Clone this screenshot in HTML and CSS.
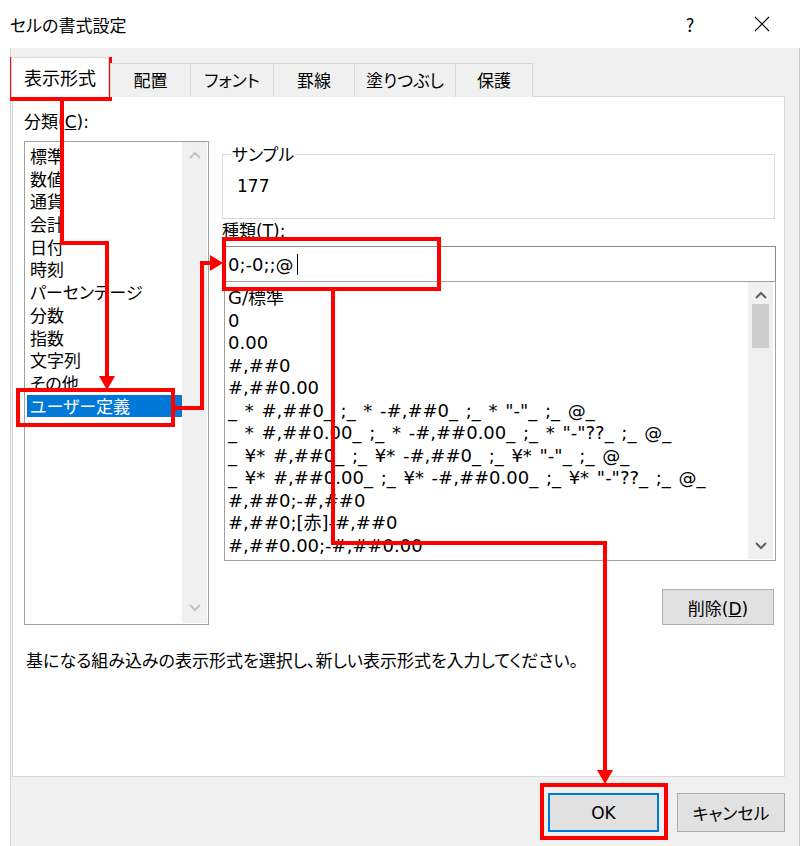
FILE: index.html
```html
<!DOCTYPE html>
<html lang="ja">
<head>
<meta charset="utf-8">
<title>セルの書式設定</title>
<link rel="stylesheet" href="styles.css">
</head>
<body>
<div class="window">
  <div class="titlebar">
    <div class="title">セルの書式設定</div>
    <div class="tbtn help">?</div>
    <div class="tbtn close">
      <svg width="16" height="16" viewBox="0 0 16 16"><path d="M1 1 L15 15 M15 1 L1 15" stroke="#000" stroke-width="1.2" fill="none"/></svg>
    </div>
  </div>
  <div class="main">
    <div class="edge"></div>
    <div class="dialog">
      <div class="tabs">
        <div class="tab active">表示形式</div>
        <div class="tab">配置</div>
        <div class="tab">フォント</div>
        <div class="tab">罫線</div>
        <div class="tab">塗りつぶし</div>
        <div class="tab">保護</div>
      </div>
      <div class="panel">
        <div class="cols">
          <div class="left">
            <div class="label">分類(<u>C</u>):</div>
            <div class="listbox">
              <ul class="items">
                <li>標準</li>
                <li>数値</li>
                <li>通貨</li>
                <li>会計</li>
                <li>日付</li>
                <li>時刻</li>
                <li>パーセンテージ</li>
                <li>分数</li>
                <li>指数</li>
                <li>文字列</li>
                <li>その他</li>
                <li class="selected">ユーザー定義</li>
              </ul>
              <div class="vscroll disabled">
                <svg class="chev" width="14" height="10" viewBox="0 0 14 10"><polyline points="2,8 7,3 12,8" fill="none" stroke="#c3c3c3" stroke-width="2"/></svg>
                <svg class="chev" width="14" height="10" viewBox="0 0 14 10"><polyline points="2,2 7,7 12,2" fill="none" stroke="#c3c3c3" stroke-width="2"/></svg>
              </div>
            </div>
          </div>
          <div class="right">
            <fieldset class="sample">
              <legend>サンプル</legend>
              <div class="sample-value">177</div>
            </fieldset>
            <div class="label type-label">種類(<u>T</u>):</div>
            <div class="input"><span>0;-0;;@</span><span class="caret"></span></div>
            <div class="typelist">
              <ul class="titems">
                <li>G/標準</li>
                <li>0</li>
                <li>0.00</li>
                <li>#,##0</li>
                <li>#,##0.00</li>
                <li>_ * #,##0_ ;_ * -#,##0_ ;_ * "-"_ ;_ @_</li>
                <li>_ * #,##0.00_ ;_ * -#,##0.00_ ;_ * "-"??_ ;_ @_</li>
                <li>_ ¥* #,##0_ ;_ ¥* -#,##0_ ;_ ¥* "-"_ ;_ @_</li>
                <li>_ ¥* #,##0.00_ ;_ ¥* -#,##0.00_ ;_ ¥* "-"??_ ;_ @_</li>
                <li>#,##0;-#,##0</li>
                <li>#,##0;[赤]-#,##0</li>
                <li>#,##0.00;-#,##0.00</li>
              </ul>
              <div class="vscroll">
                <svg class="chev" width="14" height="10" viewBox="0 0 14 10"><polyline points="2,8 7,3 12,8" fill="none" stroke="#606060" stroke-width="2"/></svg>
                <div class="thumb"></div>
                <div class="track"></div>
                <svg class="chev" width="14" height="10" viewBox="0 0 14 10"><polyline points="2,2 7,7 12,2" fill="none" stroke="#606060" stroke-width="2"/></svg>
              </div>
            </div>
            <div class="btnrow">
              <button class="btn del">削除(<u>D</u>)</button>
            </div>
          </div>
        </div>
        <p class="desc">基になる組み込みの表示形式を選択し、新しい表示形式を入力してください。</p>
      </div>
      <div class="buttons">
        <button class="btn ok">OK</button>
        <button class="btn cancel">キャンセル</button>
      </div>
    </div>
  </div>
  <svg class="annot" width="800" height="846" viewBox="0 0 800 846">
    <g fill="none" stroke="#ff0000" stroke-width="4">
      <rect x="12" y="59" width="98" height="40"/>
      <path d="M62 101 V243 H107 V378"/>
      <rect x="18" y="390" width="155" height="35"/>
      <path d="M175 408 H202 V263 H212"/>
      <rect x="224" y="239" width="215" height="50"/>
      <path d="M333 291 V543 H605 V772"/>
      <rect x="542" y="785" width="124" height="53"/>
    </g>
    <g fill="#ff0000">
      <polygon points="99,376 115,376 107,390"/>
      <polygon points="210,255 210,271 223,263"/>
      <polygon points="597,770 613,770 605,784"/>
    </g>
  </svg>
</div>
</body>
</html>
```

FILE: styles.css
```css
* { box-sizing: border-box; }
html, body { margin: 0; padding: 0; }
body {
  width: 800px;
  height: 846px;
  overflow: hidden;
  background: #f0f0f0;
  color: #000;
  font-family: "DejaVu Sans", "Noto Sans CJK JP", sans-serif;
  font-feature-settings: "palt";
  font-size: 17px;
}
ul { list-style: none; margin: 0; padding: 0; }
.window {
  position: relative;
  width: 800px;
  height: 846px;
  display: flex;
  flex-direction: column;
}
.titlebar {
  height: 48px;
  background: #fff;
  display: flex;
  align-items: center;
  padding: 0 2px 0 10px;
  font-family: "Noto Sans CJK JP", sans-serif;
  font-size: 17px;
}
.title { flex: 1; }
.tbtn {
  width: 72px;
  height: 48px;
  display: flex;
  align-items: center;
  justify-content: center;
}
.help { font-size: 18px; }
.main { flex: 1; display: flex; }
.edge {
  width: 11px;
  background: #fff;
  border-right: 1px solid #d4d4d4;
}
.dialog {
  flex: 1;
  display: flex;
  flex-direction: column;
  padding: 0 14px 0 0;
  border-right: 1px solid #c8c8c8;
}
.tabs {
  height: 49px;
  display: flex;
  align-items: flex-end;
  position: relative;
  z-index: 1;
  margin-bottom: -1px;
}
.tab {
  height: 34px;
  line-height: 31px;
  text-align: center;
  background: #f0f0f0;
  border: 1px solid #d9d9d9;
  border-bottom: none;
  margin-left: -1px;
  font-family: "Noto Sans CJK JP", sans-serif;
  font-size: 17px;
}
.tab.active {
  height: 40px;
  line-height: 38px;
  background: #fff;
  margin-left: 0;
  margin-right: 2px;
  border-color: #d9d9d9;
  font-size: 18px;
}
.tab:nth-child(1) { width: 98px; }
.tab:nth-child(2) { width: 81px; }
.tab:nth-child(3) { width: 84px; }
.tab:nth-child(4) { width: 82px; }
.tab:nth-child(5) { width: 102px; }
.tab:nth-child(6) { width: 78px; }
.panel {
  margin-left: 1px;
  width: 773px;
  height: 681px;
  background: #fff;
  border: 1px solid #d9d9d9;
  padding: 14px 8px 0 11px;
}
.cols { display: flex; gap: 13px; }
.left { width: 185px; flex: none; }
.label {
  height: 22px;
  line-height: 22px;
  font-size: 17px;
}
.left .label { margin-bottom: 8px; }
.listbox {
  height: 484px;
  border: 1px solid #a0a0a0;
  display: flex;
  padding: 3px 1px 1px 2px;
}
.items {
  flex: 1;
  font-family: "Noto Sans CJK JP", sans-serif;
  font-size: 17px;
}
.items li {
  height: 22.7px;
  line-height: 22.7px;
  padding-left: 3px;
  white-space: nowrap;
}
.items li.selected {
  background: #0078d7;
  color: #fff;
}
.vscroll {
  width: 25px;
  background: #f0f0f0;
  display: flex;
  flex-direction: column;
  align-items: center;
  justify-content: space-between;
  padding: 8px 0 10px;
}
.listbox .vscroll { margin: -3px 0 0 0; }
.chev { display: block; }
.right { width: 554px; flex: none; }
.sample {
  margin: 32px 1px 0 0;
  height: 76px;
  border: 1px solid #dcdcdc;
  padding: 0 14px;
}
.sample legend {
  font-family: "Noto Sans CJK JP", sans-serif;
  font-size: 17px;
  line-height: 22px;
  padding: 0 1px;
  margin-left: -6px;
}
.sample-value {
  font-size: 17px;
  line-height: 22px;
  padding-top: 10px;
}
.type-label { margin-top: 1px; margin-bottom: 4px; }
.input {
  margin-left: 2px;
  height: 36px;
  border: 1px solid #8c8c8c;
  display: flex;
  align-items: center;
  padding-left: 3px;
  font-size: 18px;
}
.caret {
  display: inline-block;
  width: 1px;
  height: 21px;
  background: #000;
  margin-left: 3px;
}
.typelist {
  margin: -1px 0 0 2px;
  height: 280px;
  border: 1px solid #a0a0a0;
  display: flex;
  padding: 0 2px 1px 0;
  overflow: hidden;
}
.titems {
  flex: 1;
  padding: 5px 0 0 3px;
  font-size: 18px;
  word-spacing: 2px;
  overflow: hidden;
}
.titems li {
  height: 22.5px;
  line-height: 22.5px;
  white-space: pre;
}
.typelist .vscroll {
  justify-content: flex-start;
  padding: 8px 0 8px;
}
.typelist .thumb {
  width: 17px;
  height: 44px;
  background: #cdcdcd;
  margin-top: 4px;
}
.typelist .track { flex: 1; }
.btnrow {
  display: flex;
  justify-content: flex-end;
  margin-top: 28px;
  padding-right: 2px;
}
.btn {
  font-family: "DejaVu Sans", "Noto Sans CJK JP", sans-serif;
  font-feature-settings: "palt";
  font-size: 17px;
  color: #000;
  background: #e1e1e1;
  border: 1px solid #adadad;
  padding: 0;
  margin: 0;
}
.del { width: 112px; height: 36px; }
.desc {
  margin: 24px 0 0 2px;
  font-family: "Noto Sans CJK JP", sans-serif;
  font-size: 17px;
  line-height: 22px;
}
.buttons {
  display: flex;
  justify-content: flex-end;
  gap: 18px;
  margin-top: 16px;
}
.ok {
  width: 111px;
  height: 39px;
  border: 2px solid #0078d7;
}
.cancel {
  width: 108px;
  height: 39px;
}
.annot {
  position: absolute;
  left: 0;
  top: 0;
  pointer-events: none;
}
```
